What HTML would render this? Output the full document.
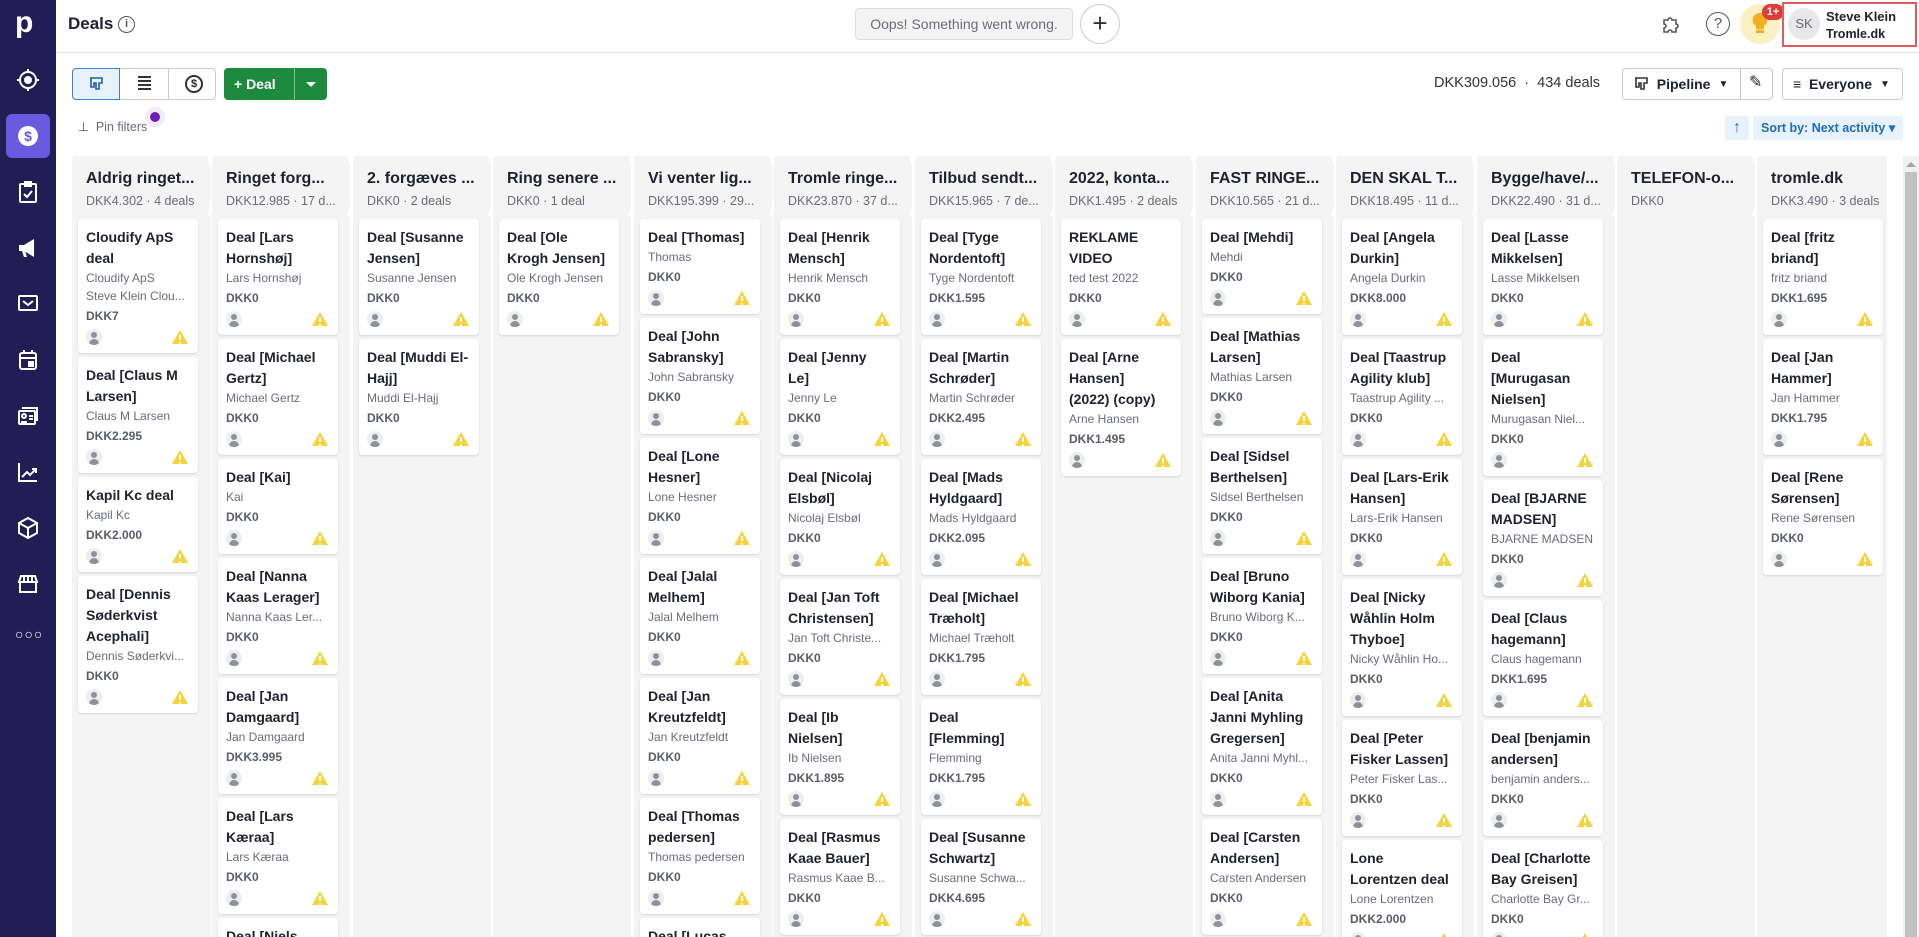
<!DOCTYPE html>
<html style="overflow:hidden;height:937px"><head><meta charset="utf-8">
<style>
*{box-sizing:border-box;margin:0;padding:0}
body{width:1919px;height:937px;overflow:hidden;background:#fff;font-family:"Liberation Sans",sans-serif;color:#21232c;position:relative}
.sb{position:absolute;left:0;top:0;width:56px;height:937px;background:#221d55}
.sb .ic{position:absolute;left:16px;width:24px;height:24px}
.act{position:absolute;left:6px;top:114px;width:44px;height:44px;border-radius:6px;background:#6a5ae0}
.hd{position:absolute;left:56px;top:0;right:0;height:53px;border-bottom:1px solid #e4e4e6}
.abs{position:absolute}
.btn{position:absolute;border:1px solid #c9cbd0;border-radius:4px;background:#fff;font-size:14px;font-weight:bold;display:flex;align-items:center}
.col{position:absolute;top:156px;width:138px;height:781px;overflow:hidden;background:#f4f4f5;border-radius:4px 0 0 0;padding-left:6px}
.col h3{font-size:16px;font-weight:bold;margin:14px 0 0 8px;height:22px;white-space:nowrap;overflow:hidden}
.col .m{font-size:12.5px;color:#6a6d76;margin:2px 0 0 8px;height:25px;white-space:nowrap}
.c{width:120px;background:#fff;border-radius:4px;box-shadow:0 1px 2px rgba(0,0,0,.12);padding:8px 8px 4px;margin-bottom:4px}
.t{font-size:14px;font-weight:bold;line-height:21px;white-space:nowrap}
.s{font-size:12px;color:#6a6d76;line-height:18px;white-space:nowrap;overflow:hidden}
.v{font-size:12px;color:#5a5d66;font-weight:bold;line-height:18px;margin-top:2px}
.i{height:24px;display:flex;justify-content:space-between;align-items:center}
.av{width:16px;height:16px;border-radius:50%;background:#eceef0;position:relative;overflow:hidden}
.av:before{content:"";position:absolute;left:5px;top:3px;width:6px;height:6px;border-radius:50%;background:#8e9198}
.av:after{content:"";position:absolute;left:3px;top:10px;width:10px;height:8px;border-radius:5px 5px 0 0;background:#8e9198}
.w{width:16px;height:14px;background:#f7d23a;clip-path:polygon(50% 0,100% 100%,0 100%);position:relative;margin-right:2px}
.w:after{content:"";position:absolute;left:7px;top:5px;width:2px;height:5px;background:#fff;box-shadow:0 7px 0 #fff}
.chev{position:absolute;right:-9px;top:0;width:12px;height:60px;background:#fff;clip-path:polygon(0 0,25% 0,100% 50%,25% 100%,0 100%,75% 50%)}
</style></head><body>
<div class="sb">
<div class="abs" style="left:15px;top:6px;color:#fff;font-size:30px;font-weight:bold">p</div>
<svg class="ic" style="top:68px" viewBox="0 0 24 24" fill="none" stroke="#fff" stroke-width="2"><circle cx="12" cy="12" r="8"/><circle cx="12" cy="12" r="3" fill="#fff"/><path d="M12 1v3M12 20v3M1 12h3M20 12h3"/></svg>
<div class="act"></div>
<svg class="ic" style="top:124px" viewBox="0 0 24 24"><circle cx="12" cy="12" r="10" fill="#fff"/><text x="12" y="17" text-anchor="middle" font-size="14" font-weight="bold" fill="#6a5ae0" font-family="Liberation Sans">$</text></svg>
<svg class="ic" style="top:180px" viewBox="0 0 24 24" fill="none" stroke="#fff" stroke-width="2"><rect x="4" y="4" width="16" height="18" rx="1"/><path d="M9 2h6v4H9zM8 14l3 3 5-6"/></svg>
<svg class="ic" style="top:236px" viewBox="0 0 24 24" fill="#fff"><path d="M3 9h5l10-6v18l-10-6H3z"/><path d="M6 15l2 6h3l-2-6z"/></svg>
<svg class="ic" style="top:291px" viewBox="0 0 24 24" fill="none" stroke="#fff" stroke-width="2"><rect x="3" y="5" width="18" height="14" rx="1"/><path d="M7 10l5 4 5-4"/></svg>
<svg class="ic" style="top:348px" viewBox="0 0 24 24" fill="none" stroke="#fff" stroke-width="2"><rect x="4" y="5" width="16" height="16" rx="2"/><path d="M8 2v4M16 2v4M4 10h16"/><rect x="13" y="14" width="4" height="4" fill="#fff"/></svg>
<svg class="ic" style="top:404px" viewBox="0 0 24 24" fill="none" stroke="#fff" stroke-width="2"><rect x="3" y="7" width="16" height="13" rx="1"/><path d="M6 4h15v13"/><circle cx="8" cy="12" r="2"/><path d="M5 18h6M13 12h4M13 15h4"/></svg>
<svg class="ic" style="top:460px" viewBox="0 0 24 24" fill="none" stroke="#fff" stroke-width="2"><path d="M3 3v18h18M6 17l5-5 3 3 6-6M16 9h4v4"/></svg>
<svg class="ic" style="top:516px" viewBox="0 0 24 24" fill="none" stroke="#fff" stroke-width="2"><path d="M12 2l9 5v10l-9 5-9-5V7zM3 7l9 5 9-5M12 12v10"/></svg>
<svg class="ic" style="top:572px" viewBox="0 0 24 24" fill="none" stroke="#fff" stroke-width="2"><path d="M5 4h14l2 6H3zM4 10v10h16V10M8 4v6M12 4v6M16 4v6"/></svg>
<div class="abs" style="left:15px;top:626px;color:#fff;font-size:14px;letter-spacing:1px;font-weight:bold">○○○</div>
</div>
<div class="hd">
<div class="abs" style="left:12px;top:14px;font-size:17px;font-weight:bold">Deals</div>
<div class="abs" style="left:62px;top:16px;width:17px;height:17px;border:1.5px solid #555;border-radius:50%;font-size:11px;text-align:center;line-height:14px;font-weight:bold;color:#555">i</div>
<div class="abs" style="left:799px;top:8px;width:218px;height:32px;background:#f4f4f5;border:1px solid #dcdde0;border-radius:4px;font-size:14px;color:#6a6d76;line-height:30px;text-align:center">Oops! Something went wrong.</div>
<div class="abs" style="left:1024px;top:4px;width:40px;height:40px;border:1px solid #c9cbd0;border-radius:50%;font-size:26px;line-height:36px;text-align:center;color:#333">+</div>
<svg class="abs" style="left:1604px;top:12px" width="24" height="24" viewBox="0 0 24 24" fill="none" stroke="#555" stroke-width="1.6"><path d="M4 8h4a2 2 0 1 1 4 0h4v4a2 2 0 1 1 0 4v4h-4a2 2 0 1 0-4 0H4v-4a2 2 0 1 0 0-4z"/></svg>
<div class="abs" style="left:1650px;top:12px;width:24px;height:24px;border:1.6px solid #555;border-radius:50%;font-size:15px;text-align:center;line-height:21px;color:#555">?</div>
<div class="abs" style="left:1684px;top:4px;width:40px;height:40px;border-radius:50%;background:#fdf1c4"></div>
<svg class="abs" style="left:1694px;top:12px" width="20" height="24" viewBox="0 0 20 24"><path d="M10 1a7 7 0 0 0-4 13v3h8v-3a7 7 0 0 0-4-13z" fill="#f2b01e"/><rect x="6" y="18" width="8" height="3" fill="#f2b01e"/></svg>
<div class="abs" style="left:1706px;top:4px;width:22px;height:16px;border-radius:8px;background:#e03b3b;color:#fff;font-size:11px;font-weight:bold;text-align:center;line-height:16px">1+</div>
<div class="abs" style="left:1726px;top:2px;width:135px;height:45px;border:2px solid #e05b5b"></div>
<div class="abs" style="left:1732px;top:8px;width:32px;height:32px;border-radius:50%;background:#e8e8ea;color:#6a6d76;font-size:13px;text-align:center;line-height:32px">SK</div>
<div class="abs" style="left:1770px;top:8px;font-size:13px;font-weight:bold;line-height:17px">Steve Klein<br><span style="font-size:12.5px">Tromle.dk</span></div>
</div>
<div class="abs" style="left:72px;top:68px;width:144px;height:32px;border:1px solid #c9cbd0;border-radius:4px"></div>
<div class="abs" style="left:72px;top:68px;width:48px;height:32px;border:1px solid #3b82d6;border-radius:4px 0 0 4px;background:#e8f2fc"></div>
<svg class="abs" style="left:88px;top:76px" width="16" height="16" viewBox="0 0 16 16" fill="none" stroke="#1f5fae" stroke-width="1.6"><path d="M2 2h12v5h-3v6H8V7H6v4H3V2"/></svg>
<div class="abs" style="left:168px;top:68px;width:1px;height:32px;background:#c9cbd0"></div>
<div class="abs" style="left:138px;top:76px;width:13px;height:14px;border-top:2px solid #333;border-bottom:2px solid #333"></div>
<div class="abs" style="left:138px;top:80px;width:13px;height:6px;border-top:2px solid #333;border-bottom:2px solid #333"></div>
<div class="abs" style="left:185px;top:75px;width:18px;height:18px;border:2px solid #333;border-radius:50%;font-size:11px;font-weight:bold;text-align:center;line-height:14px">$</div>
<div class="abs" style="left:224px;top:68px;width:103px;height:32px;background:#1e8a3e;border-radius:4px;color:#fff;font-size:14px;font-weight:bold;line-height:32px;padding-left:10px">+ Deal</div>
<div class="abs" style="left:294px;top:68px;width:1px;height:32px;background:#7bbf8c"></div>
<div class="abs" style="left:306px;top:82px;border:5px solid transparent;border-top-color:#fff"></div>
<div class="abs" style="left:145px;top:107px;width:20px;height:20px;border-radius:50%;background:#f1ecf7"></div>
<div class="abs" style="left:150px;top:112px;width:10px;height:10px;border-radius:50%;background:#6c1fb3"></div>
<div class="abs" style="left:78px;top:119px;font-size:12.5px;color:#555">⊥ &nbsp;<span style="color:#6a6d76">Pin filters</span></div>
<div class="abs" style="left:1434px;top:75px;font-size:14.5px;color:#333">DKK309.056 &nbsp;·&nbsp; 434 deals</div>
<div class="btn" style="left:1622px;top:68px;width:151px;height:32px;padding-left:10px"><svg width="16" height="16" viewBox="0 0 16 16" fill="none" stroke="#333" stroke-width="1.6"><path d="M2 2h12v5h-3v6H8V7H6v4H3V2"/></svg>&nbsp; Pipeline <span style="font-size:10px;margin-left:8px">▼</span></div>
<div class="abs" style="left:1740px;top:68px;width:1px;height:32px;background:#c9cbd0"></div>
<div class="abs" style="left:1749px;top:72px;font-size:16px">✎</div>
<div class="btn" style="left:1782px;top:68px;width:121px;height:32px;padding-left:10px"><span style="font-weight:normal">≡</span>&nbsp; Everyone <span style="font-size:10px;margin-left:8px">▼</span></div>
<div class="abs" style="left:1725px;top:116px;width:24px;height:24px;background:#e8f2fc;border-radius:3px;color:#1f6bc4;text-align:center;font-size:16px;line-height:24px;font-weight:bold">↑</div>
<div class="abs" style="left:1753px;top:116px;width:150px;height:24px;background:#e8f2fc;border-radius:3px;color:#1f6bc4;font-size:12.5px;font-weight:bold;line-height:24px;padding-left:8px">Sort by: Next activity ▾</div>
<div class="abs" style="left:1903px;top:156px;width:16px;height:781px;background:#f1f1f1"></div>
<div class="abs" style="left:1906px;top:162px;border:5px solid transparent;border-bottom-color:#a3a3a3;border-top:0"></div>
<div class="abs" style="left:1905px;top:172px;width:12px;height:765px;background:#c1c1c1"></div>

<div class="col" style="left:72px"><div class="chev"></div><h3>Aldrig ringet...</h3><div class="m">DKK4.302 · 4 deals</div>
<div class="c"><div class="t">Cloudify ApS<br>deal</div><div class="s">Cloudify ApS</div><div class="s">Steve Klein Clou...</div><div class="v">DKK7</div><div class="i"><span class="av"></span><span class="w"></span></div></div>
<div class="c"><div class="t">Deal [Claus M<br>Larsen]</div><div class="s">Claus M Larsen</div><div class="v">DKK2.295</div><div class="i"><span class="av"></span><span class="w"></span></div></div>
<div class="c"><div class="t">Kapil Kc deal</div><div class="s">Kapil Kc</div><div class="v">DKK2.000</div><div class="i"><span class="av"></span><span class="w"></span></div></div>
<div class="c"><div class="t">Deal [Dennis<br>Søderkvist<br>Acephali]</div><div class="s">Dennis Søderkvi...</div><div class="v">DKK0</div><div class="i"><span class="av"></span><span class="w"></span></div></div>
</div>
<div class="col" style="left:212px"><div class="chev"></div><h3>Ringet forg...</h3><div class="m">DKK12.985 · 17 d...</div>
<div class="c"><div class="t">Deal [Lars<br>Hornshøj]</div><div class="s">Lars Hornshøj</div><div class="v">DKK0</div><div class="i"><span class="av"></span><span class="w"></span></div></div>
<div class="c"><div class="t">Deal [Michael<br>Gertz]</div><div class="s">Michael Gertz</div><div class="v">DKK0</div><div class="i"><span class="av"></span><span class="w"></span></div></div>
<div class="c"><div class="t">Deal [Kai]</div><div class="s">Kai</div><div class="v">DKK0</div><div class="i"><span class="av"></span><span class="w"></span></div></div>
<div class="c"><div class="t">Deal [Nanna<br>Kaas Lerager]</div><div class="s">Nanna Kaas Ler...</div><div class="v">DKK0</div><div class="i"><span class="av"></span><span class="w"></span></div></div>
<div class="c"><div class="t">Deal [Jan<br>Damgaard]</div><div class="s">Jan Damgaard</div><div class="v">DKK3.995</div><div class="i"><span class="av"></span><span class="w"></span></div></div>
<div class="c"><div class="t">Deal [Lars<br>Kæraa]</div><div class="s">Lars Kæraa</div><div class="v">DKK0</div><div class="i"><span class="av"></span><span class="w"></span></div></div>
<div class="c"><div class="t">Deal [Niels<br>Nielsen]</div><div class="s">Niels</div><div class="v">DKK0</div><div class="i"><span class="av"></span><span class="w"></span></div></div>
</div>
<div class="col" style="left:353px"><div class="chev"></div><h3>2. forgæves ...</h3><div class="m">DKK0 · 2 deals</div>
<div class="c"><div class="t">Deal [Susanne<br>Jensen]</div><div class="s">Susanne Jensen</div><div class="v">DKK0</div><div class="i"><span class="av"></span><span class="w"></span></div></div>
<div class="c"><div class="t">Deal [Muddi El-<br>Hajj]</div><div class="s">Muddi El-Hajj</div><div class="v">DKK0</div><div class="i"><span class="av"></span><span class="w"></span></div></div>
</div>
<div class="col" style="left:493px"><div class="chev"></div><h3>Ring senere ...</h3><div class="m">DKK0 · 1 deal</div>
<div class="c"><div class="t">Deal [Ole<br>Krogh Jensen]</div><div class="s">Ole Krogh Jensen</div><div class="v">DKK0</div><div class="i"><span class="av"></span><span class="w"></span></div></div>
</div>
<div class="col" style="left:634px"><div class="chev"></div><h3>Vi venter lig...</h3><div class="m">DKK195.399 · 29...</div>
<div class="c"><div class="t">Deal [Thomas]</div><div class="s">Thomas</div><div class="v">DKK0</div><div class="i"><span class="av"></span><span class="w"></span></div></div>
<div class="c"><div class="t">Deal [John<br>Sabransky]</div><div class="s">John Sabransky</div><div class="v">DKK0</div><div class="i"><span class="av"></span><span class="w"></span></div></div>
<div class="c"><div class="t">Deal [Lone<br>Hesner]</div><div class="s">Lone Hesner</div><div class="v">DKK0</div><div class="i"><span class="av"></span><span class="w"></span></div></div>
<div class="c"><div class="t">Deal [Jalal<br>Melhem]</div><div class="s">Jalal Melhem</div><div class="v">DKK0</div><div class="i"><span class="av"></span><span class="w"></span></div></div>
<div class="c"><div class="t">Deal [Jan<br>Kreutzfeldt]</div><div class="s">Jan Kreutzfeldt</div><div class="v">DKK0</div><div class="i"><span class="av"></span><span class="w"></span></div></div>
<div class="c"><div class="t">Deal [Thomas<br>pedersen]</div><div class="s">Thomas pedersen</div><div class="v">DKK0</div><div class="i"><span class="av"></span><span class="w"></span></div></div>
<div class="c"><div class="t">Deal [Lucas<br>Hansen]</div><div class="s">Lucas</div><div class="v">DKK0</div><div class="i"><span class="av"></span><span class="w"></span></div></div>
</div>
<div class="col" style="left:774px"><div class="chev"></div><h3>Tromle ringe...</h3><div class="m">DKK23.870 · 37 d...</div>
<div class="c"><div class="t">Deal [Henrik<br>Mensch]</div><div class="s">Henrik Mensch</div><div class="v">DKK0</div><div class="i"><span class="av"></span><span class="w"></span></div></div>
<div class="c"><div class="t">Deal [Jenny<br>Le]</div><div class="s">Jenny Le</div><div class="v">DKK0</div><div class="i"><span class="av"></span><span class="w"></span></div></div>
<div class="c"><div class="t">Deal [Nicolaj<br>Elsbøl]</div><div class="s">Nicolaj Elsbøl</div><div class="v">DKK0</div><div class="i"><span class="av"></span><span class="w"></span></div></div>
<div class="c"><div class="t">Deal [Jan Toft<br>Christensen]</div><div class="s">Jan Toft Christe...</div><div class="v">DKK0</div><div class="i"><span class="av"></span><span class="w"></span></div></div>
<div class="c"><div class="t">Deal [Ib<br>Nielsen]</div><div class="s">Ib Nielsen</div><div class="v">DKK1.895</div><div class="i"><span class="av"></span><span class="w"></span></div></div>
<div class="c"><div class="t">Deal [Rasmus<br>Kaae Bauer]</div><div class="s">Rasmus Kaae B...</div><div class="v">DKK0</div><div class="i"><span class="av"></span><span class="w"></span></div></div>
</div>
<div class="col" style="left:915px"><div class="chev"></div><h3>Tilbud sendt...</h3><div class="m">DKK15.965 · 7 de...</div>
<div class="c"><div class="t">Deal [Tyge<br>Nordentoft]</div><div class="s">Tyge Nordentoft</div><div class="v">DKK1.595</div><div class="i"><span class="av"></span><span class="w"></span></div></div>
<div class="c"><div class="t">Deal [Martin<br>Schrøder]</div><div class="s">Martin Schrøder</div><div class="v">DKK2.495</div><div class="i"><span class="av"></span><span class="w"></span></div></div>
<div class="c"><div class="t">Deal [Mads<br>Hyldgaard]</div><div class="s">Mads Hyldgaard</div><div class="v">DKK2.095</div><div class="i"><span class="av"></span><span class="w"></span></div></div>
<div class="c"><div class="t">Deal [Michael<br>Træholt]</div><div class="s">Michael Træholt</div><div class="v">DKK1.795</div><div class="i"><span class="av"></span><span class="w"></span></div></div>
<div class="c"><div class="t">Deal<br>[Flemming]</div><div class="s">Flemming</div><div class="v">DKK1.795</div><div class="i"><span class="av"></span><span class="w"></span></div></div>
<div class="c"><div class="t">Deal [Susanne<br>Schwartz]</div><div class="s">Susanne Schwa...</div><div class="v">DKK4.695</div><div class="i"><span class="av"></span><span class="w"></span></div></div>
</div>
<div class="col" style="left:1055px"><div class="chev"></div><h3>2022, konta...</h3><div class="m">DKK1.495 · 2 deals</div>
<div class="c"><div class="t">REKLAME<br>VIDEO</div><div class="s">ted test 2022</div><div class="v">DKK0</div><div class="i"><span class="av"></span><span class="w"></span></div></div>
<div class="c"><div class="t">Deal [Arne<br>Hansen]<br>(2022) (copy)</div><div class="s">Arne Hansen</div><div class="v">DKK1.495</div><div class="i"><span class="av"></span><span class="w"></span></div></div>
</div>
<div class="col" style="left:1196px"><div class="chev"></div><h3>FAST RINGE...</h3><div class="m">DKK10.565 · 21 d...</div>
<div class="c"><div class="t">Deal [Mehdi]</div><div class="s">Mehdi</div><div class="v">DKK0</div><div class="i"><span class="av"></span><span class="w"></span></div></div>
<div class="c"><div class="t">Deal [Mathias<br>Larsen]</div><div class="s">Mathias Larsen</div><div class="v">DKK0</div><div class="i"><span class="av"></span><span class="w"></span></div></div>
<div class="c"><div class="t">Deal [Sidsel<br>Berthelsen]</div><div class="s">Sidsel Berthelsen</div><div class="v">DKK0</div><div class="i"><span class="av"></span><span class="w"></span></div></div>
<div class="c"><div class="t">Deal [Bruno<br>Wiborg Kania]</div><div class="s">Bruno Wiborg K...</div><div class="v">DKK0</div><div class="i"><span class="av"></span><span class="w"></span></div></div>
<div class="c"><div class="t">Deal [Anita<br>Janni Myhling<br>Gregersen]</div><div class="s">Anita Janni Myhl...</div><div class="v">DKK0</div><div class="i"><span class="av"></span><span class="w"></span></div></div>
<div class="c"><div class="t">Deal [Carsten<br>Andersen]</div><div class="s">Carsten Andersen</div><div class="v">DKK0</div><div class="i"><span class="av"></span><span class="w"></span></div></div>
</div>
<div class="col" style="left:1336px"><div class="chev"></div><h3>DEN SKAL T...</h3><div class="m">DKK18.495 · 11 d...</div>
<div class="c"><div class="t">Deal [Angela<br>Durkin]</div><div class="s">Angela Durkin</div><div class="v">DKK8.000</div><div class="i"><span class="av"></span><span class="w"></span></div></div>
<div class="c"><div class="t">Deal [Taastrup<br>Agility klub]</div><div class="s">Taastrup Agility ...</div><div class="v">DKK0</div><div class="i"><span class="av"></span><span class="w"></span></div></div>
<div class="c"><div class="t">Deal [Lars-Erik<br>Hansen]</div><div class="s">Lars-Erik Hansen</div><div class="v">DKK0</div><div class="i"><span class="av"></span><span class="w"></span></div></div>
<div class="c"><div class="t">Deal [Nicky<br>Wåhlin Holm<br>Thyboe]</div><div class="s">Nicky Wåhlin Ho...</div><div class="v">DKK0</div><div class="i"><span class="av"></span><span class="w"></span></div></div>
<div class="c"><div class="t">Deal [Peter<br>Fisker Lassen]</div><div class="s">Peter Fisker Las...</div><div class="v">DKK0</div><div class="i"><span class="av"></span><span class="w"></span></div></div>
<div class="c"><div class="t">Lone<br>Lorentzen deal</div><div class="s">Lone Lorentzen</div><div class="v">DKK2.000</div><div class="i"><span class="av"></span><span class="w"></span></div></div>
</div>
<div class="col" style="left:1477px"><div class="chev"></div><h3>Bygge/have/...</h3><div class="m">DKK22.490 · 31 d...</div>
<div class="c"><div class="t">Deal [Lasse<br>Mikkelsen]</div><div class="s">Lasse Mikkelsen</div><div class="v">DKK0</div><div class="i"><span class="av"></span><span class="w"></span></div></div>
<div class="c"><div class="t">Deal<br>[Murugasan<br>Nielsen]</div><div class="s">Murugasan Niel...</div><div class="v">DKK0</div><div class="i"><span class="av"></span><span class="w"></span></div></div>
<div class="c"><div class="t">Deal [BJARNE<br>MADSEN]</div><div class="s">BJARNE MADSEN</div><div class="v">DKK0</div><div class="i"><span class="av"></span><span class="w"></span></div></div>
<div class="c"><div class="t">Deal [Claus<br>hagemann]</div><div class="s">Claus hagemann</div><div class="v">DKK1.695</div><div class="i"><span class="av"></span><span class="w"></span></div></div>
<div class="c"><div class="t">Deal [benjamin<br>andersen]</div><div class="s">benjamin anders...</div><div class="v">DKK0</div><div class="i"><span class="av"></span><span class="w"></span></div></div>
<div class="c"><div class="t">Deal [Charlotte<br>Bay Greisen]</div><div class="s">Charlotte Bay Gr...</div><div class="v">DKK0</div><div class="i"><span class="av"></span><span class="w"></span></div></div>
</div>
<div class="col" style="left:1617px"><div class="chev"></div><h3>TELEFON-o...</h3><div class="m">DKK0</div></div>
<div class="col" style="left:1757px;width:130px"><h3>tromle.dk</h3><div class="m">DKK3.490 · 3 deals</div>
<div class="c"><div class="t">Deal [fritz<br>briand]</div><div class="s">fritz briand</div><div class="v">DKK1.695</div><div class="i"><span class="av"></span><span class="w"></span></div></div>
<div class="c"><div class="t">Deal [Jan<br>Hammer]</div><div class="s">Jan Hammer</div><div class="v">DKK1.795</div><div class="i"><span class="av"></span><span class="w"></span></div></div>
<div class="c"><div class="t">Deal [Rene<br>Sørensen]</div><div class="s">Rene Sørensen</div><div class="v">DKK0</div><div class="i"><span class="av"></span><span class="w"></span></div></div>
</div>
</body></html>
